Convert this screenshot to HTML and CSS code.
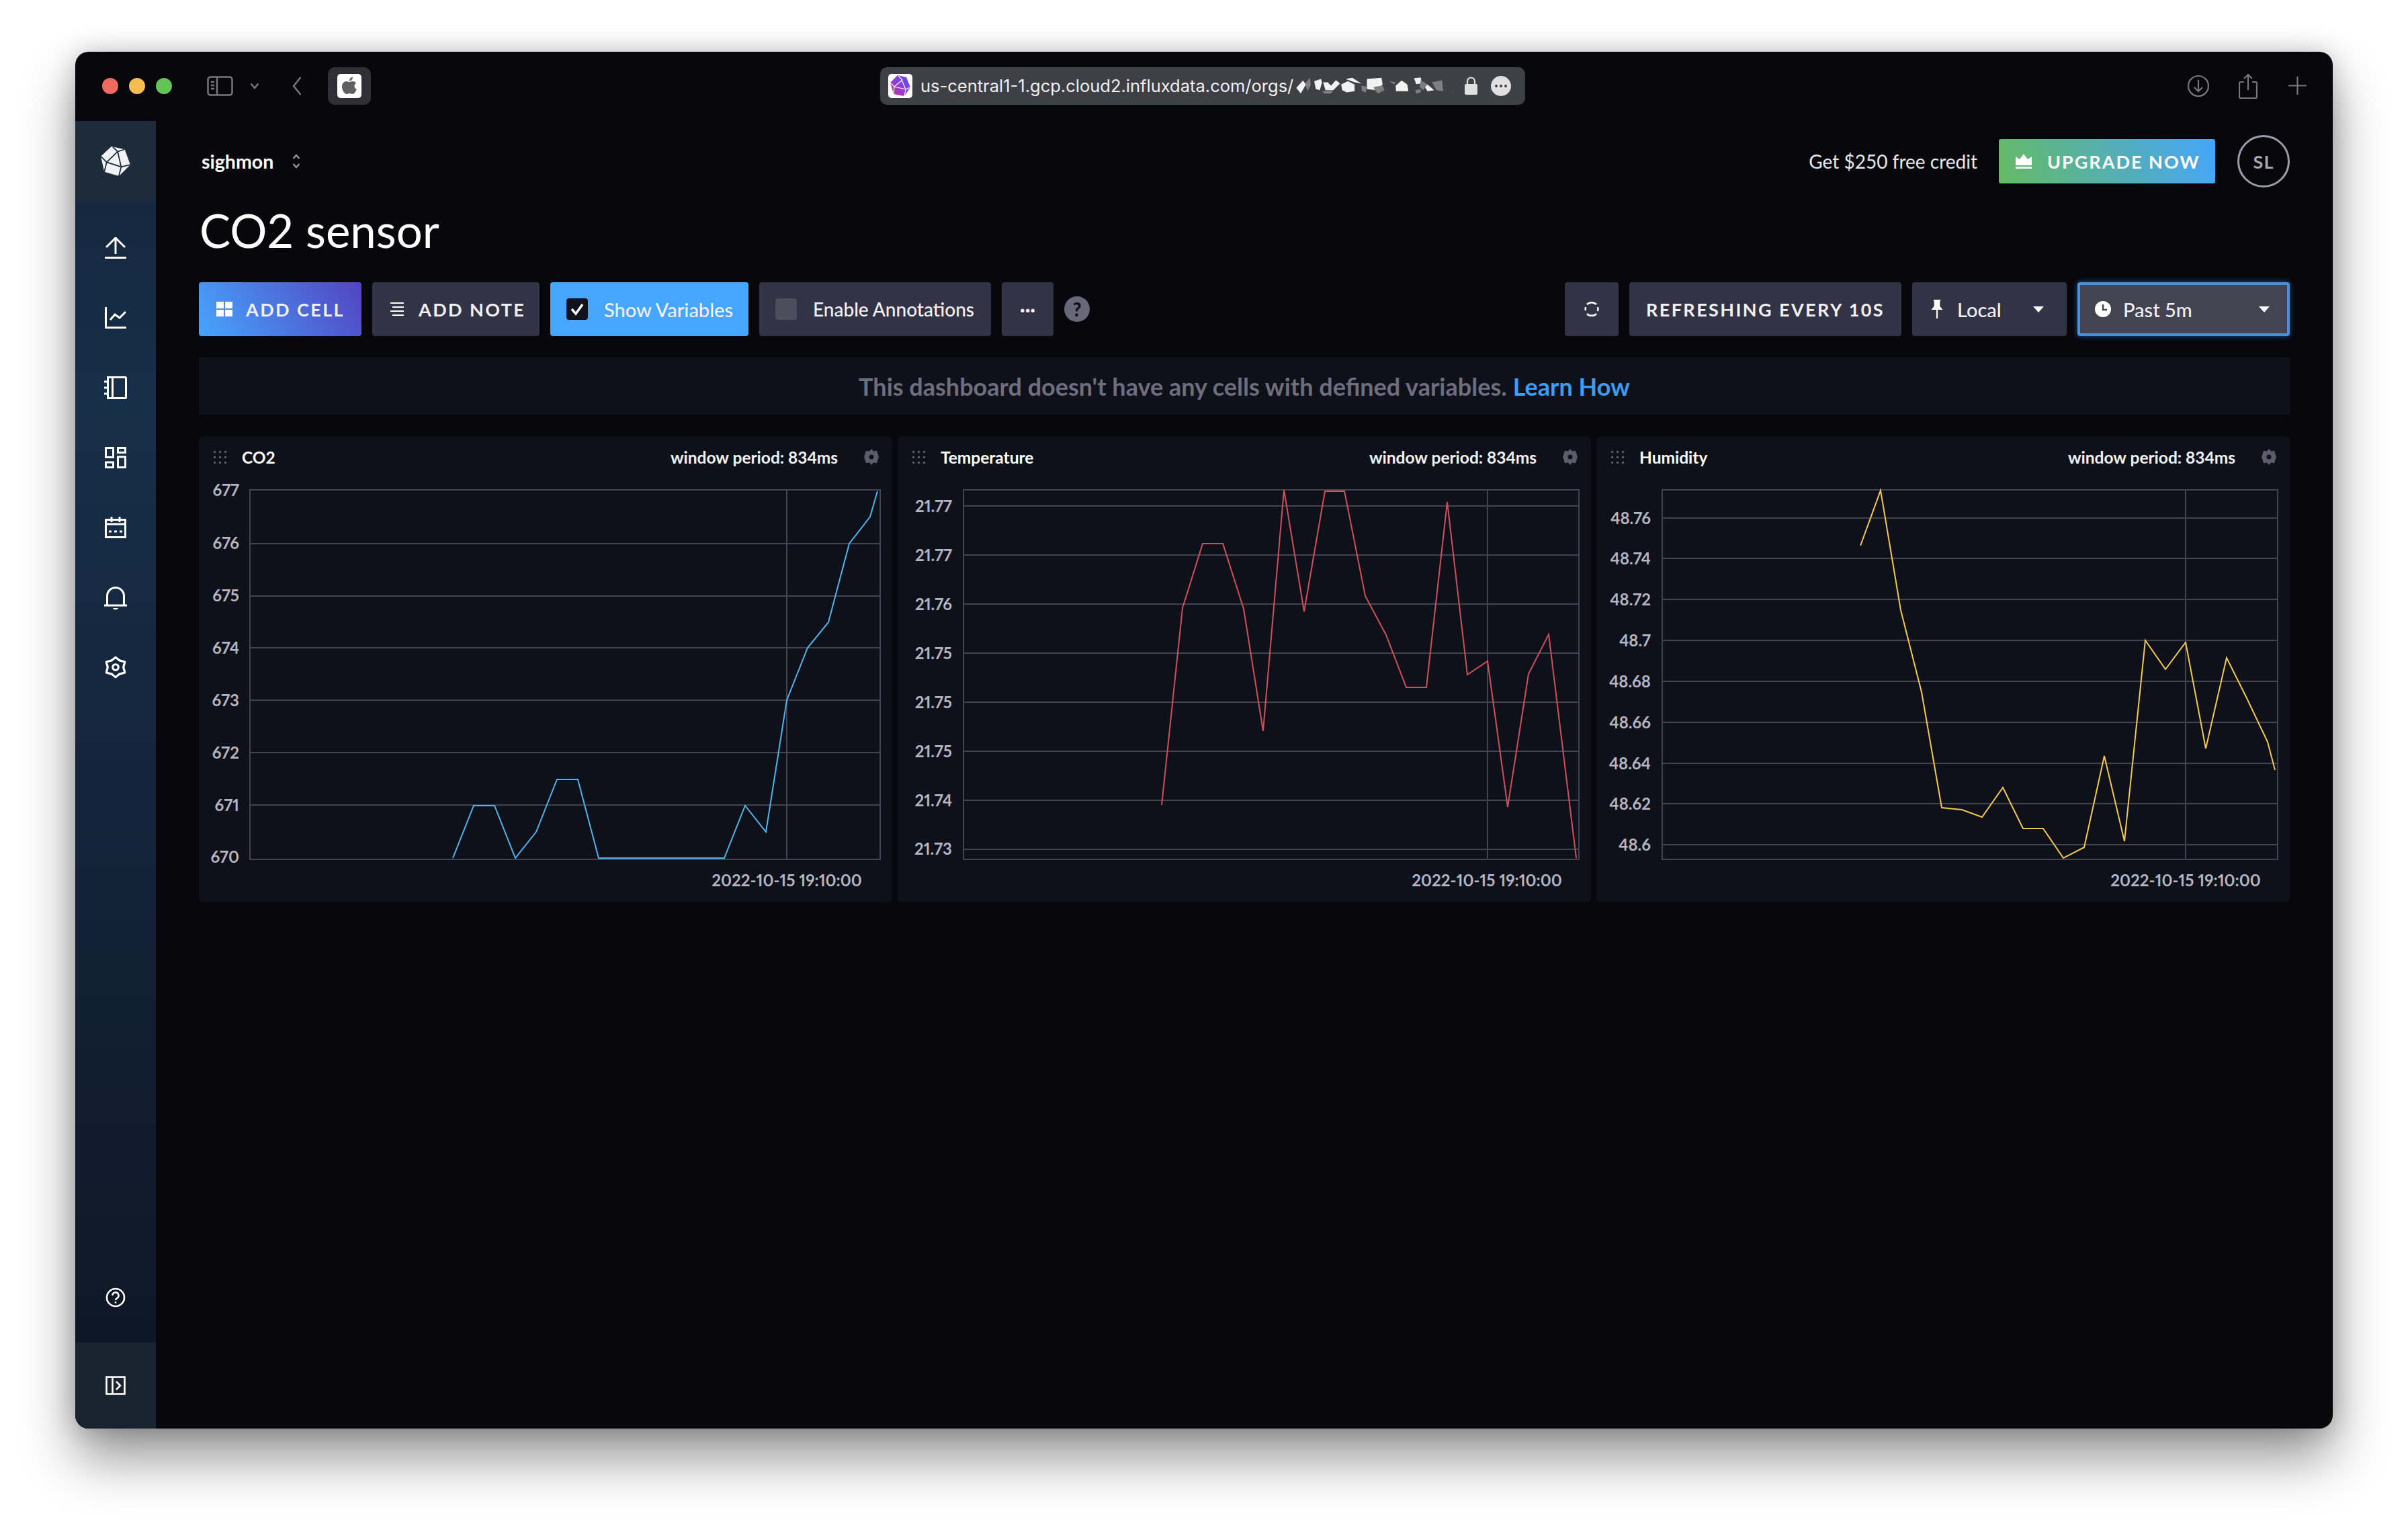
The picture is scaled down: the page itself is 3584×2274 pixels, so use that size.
FILE: index.html
```html
<!DOCTYPE html>
<html lang="en">
<head>
    <meta charset="UTF-8">
    <title>CO2 sensor</title>
    <link rel="stylesheet" href="styles.css">
</head>
<body>
<div class="window">

    <!-- browser chrome -->
    <div class="titlebar">
        <span class="light red"></span>
        <span class="light yellow"></span>
        <span class="light green"></span>
        <svg class="tb-sidebar" width="39" height="30" viewBox="0 0 39 30" fill="none" stroke="#77777c" stroke-width="2.5">
            <rect x="1.5" y="1.5" width="36" height="27" rx="4"/>
            <path d="M15 1.5v27M6 9h5M6 14h5M6 19h5"/>
        </svg>
        <svg class="tb-chevron" width="14" height="10" viewBox="0 0 14 10" fill="none" stroke="#77777c" stroke-width="2.5"><path d="M1.5 1.5L7 8l5.500-6.500"/></svg>
        <svg class="tb-back" width="14" height="28" viewBox="0 0 14 28" fill="none" stroke="#77777c" stroke-width="2.5"><path d="M12.500 1L2 14l10.500 13"/></svg>
        <div class="tb-tab">
            <div class="tab-icon">
                <svg width="24" height="28" viewBox="0 0 24 28" fill="#5f5f62">
                    <path d="M12 8c1.700 0 3-1 5-1 2.200 0 4 1 5 2.700-3.800 2.200-3.200 7.500.8 9-1.200 3.200-3.500 7.300-6 7.300-1.700 0-2.600-1-4.500-1s-3 1-4.500 1C4.800 26 1 20 1 15c0-5 3.200-8 6.500-8C9.200 7 10.500 8 12 8z"/>
                    <path d="M12 6.500C12 3.500 14 1 17 .5c.2 3-2 6-5 6z"/>
                </svg>
            </div>
        </div>
        <div class="urlbar">
            <div class="url-favicon">
                <svg width="36" height="36" viewBox="0 0 36 36">
                    <defs>
                        <linearGradient id="favgrad" x1="0" y1="1" x2="1" y2="0">
                            <stop offset="0" stop-color="#d42a7c"/>
                            <stop offset=".5" stop-color="#8a3fe0"/>
                            <stop offset="1" stop-color="#5a4df0"/>
                        </linearGradient>
                    </defs>
                    <polygon points="14,2 27,5 33,20 24,33 8,30 3,13" fill="url(#favgrad)"/>
                    <path d="M15 3l6 6M21 9L9 19M21 9l-1 0 6 14M9 19l17 4M26 23l-2 10M26 23l7-3M3 13l6 6M9 19l-1 11" stroke="#fff" stroke-width="1.200" fill="none"/>
                </svg>
            </div>
            <span class="url-text">us-central1-1.gcp.cloud2.influxdata.com/orgs/</span>
            <!-- the org id is smudged out in the screenshot -->
            <svg class="url-smudge" width="237" height="37" viewBox="75 50 710 110">
                <g fill="#f2f2f2">
                    <polygon points="85,115 115,82 128,100 105,140"/>
                    <polygon points="165,85 195,75 200,90 190,125 172,120"/>
                    <polygon points="205,90 225,90 240,105 262,80 280,95 250,125 215,125"/>
                    <polygon points="285,100 315,85 345,100 345,130 310,135 290,125"/>
                    <polygon points="305,75 335,70 375,95 345,90"/>
                    <polygon points="400,75 465,70 470,100 440,125 400,120"/>
                    <polygon points="528,105 555,82 580,100 585,130 530,130"/>
                    <polygon points="610,72 640,68 645,95 620,98"/>
                    <polygon points="655,105 670,100 700,125 670,130"/>
                </g>
                <g fill="#7d7d82">
                    <polygon points="125,95 145,70 150,100 135,130"/>
                    <polygon points="200,130 250,125 240,140 210,140"/>
                    <polygon points="375,105 400,110 395,135 378,130"/>
                    <polygon points="430,110 470,105 478,125 450,140 435,125"/>
                    <polygon points="500,85 530,90 520,100"/>
                    <polygon points="640,80 670,100 650,125 635,110"/>
                    <polygon points="615,125 640,120 640,135 620,140"/>
                    <polygon points="690,90 735,80 740,130 710,125"/>
                </g>
                <polygon points="780,130 800,135 795,152 785,150" fill="#505056"/>
            </svg>
            <svg class="url-lock" width="19" height="27" viewBox="0 0 19 27">
                <path d="M4 12V7a5.500 5.500 0 0 1 11 0v5" fill="none" stroke="#e0e0e0" stroke-width="2.200"/>
                <rect x="0" y="11" width="19" height="16" rx="2" fill="#e0e0e0"/>
            </svg>
            <div class="url-more"><span></span><span></span><span></span></div>
        </div>
        <svg class="tb-download" width="32" height="34" viewBox="0 0 32 34" fill="none" stroke="#77777c" stroke-width="2.200">
            <circle cx="16" cy="17" r="15"/>
            <path d="M16 8v17M10 19l6 6 6-6"/>
        </svg>
        <svg class="tb-share" width="28" height="38" viewBox="0 0 28 38" fill="none" stroke="#77777c" stroke-width="2.200">
            <path d="M8 13H3a2 2 0 0 0-2 2v20a2 2 0 0 0 2 2h22a2 2 0 0 0 2-2V15a2 2 0 0 0-2-2h-5"/>
            <path d="M14 25V2M8 8l6-6 6 6"/>
        </svg>
        <svg class="tb-plus" width="27" height="27" viewBox="0 0 27 27" fill="none" stroke="#77777c" stroke-width="2.200"><path d="M13.500 0v27M0 13.500h27"/></svg>
    </div>

    <div class="app">
        <nav class="sidebar">
            <div class="side-logo">
                <svg width="46" height="46" viewBox="0 0 44 44">
                    <polygon points="16,1 35,5 43,27 27,43 6,37 1,15" fill="#f1f2f6"/>
                    <path d="M18 1.500L25 8.300M25 8.300L9.300 23.300M25 8.300L35 5M25 8.300L30 30M9.300 23.300L30 30M30 30L26.700 43M30 30L43 27M1 15L9.300 23.300M9.300 23.300L6 37" stroke="#1d2b3b" stroke-width="1.700" fill="none"/>
                </svg>
            </div>
            <div class="side-item">
                <svg width="32" height="32" viewBox="0 0 32 32" class="side-icon">
                    <path d="M16 2v23M2 15L16 1l14 14"/>
                    <path d="M0 30.500h32"/>
                </svg>
            </div>
            <div class="side-item">
                <svg width="32" height="32" viewBox="0 0 32 32" class="side-icon">
                    <path d="M1.500 0v30.500H32"/>
                    <path d="M8 19l7-8 7 5 9-9"/>
                </svg>
            </div>
            <div class="side-item">
                <svg width="34" height="34" viewBox="0 0 34 34" class="side-icon">
                    <path d="M5.500 1.500h26a1 1 0 0 1 1 1v29a1 1 0 0 1-1 1h-26zM12.500 1.500v31M0 8h5M0 17h5M0 26h5"/>
                </svg>
            </div>
            <div class="side-item">
                <svg width="32" height="32" viewBox="0 0 32 32" class="side-icon">
                    <rect x="1.500" y="1.500" width="11" height="14"/>
                    <rect x="19.500" y="1.500" width="11" height="7"/>
                    <rect x="1.500" y="23" width="11" height="7.500"/>
                    <rect x="19.500" y="15" width="11" height="15.500"/>
                </svg>
            </div>
            <div class="side-item">
                <svg width="32" height="32" viewBox="0 0 32 32" class="side-icon">
                    <path d="M1.500 4.500h29v26h-29zM1.500 11h29M10 0v8M22 0v8"/>
                    <path d="M6 22h4M14 22h4M22 22h4"/>
                </svg>
            </div>
            <div class="side-item bell">
                <svg width="34" height="36" viewBox="0 0 34 36" class="side-icon">
                    <path d="M4.500 28V14a12.500 12.500 0 0 1 25 0v14M0 28h34"/>
                    <path d="M13 32c1 3 7 3 8 0z" class="solid"/>
                </svg>
            </div>
            <div class="side-item">
                <svg width="34" height="34" viewBox="0 0 32 32" class="side-icon">
                    <polygon points="16,2 21.500,6.500 29,8.500 27,16 29,23.500 21.500,25.500 16,30 10.500,25.500 3,23.500 5,16 3,8.500 10.500,6.500" stroke-linejoin="round"/>
                    <circle cx="16" cy="16" r="4"/>
                </svg>
            </div>
            <div class="side-help">
                <svg width="30" height="30" viewBox="0 0 30 30" class="side-icon thin">
                    <circle cx="15" cy="15" r="13"/>
                    <path d="M10.500 12a4.500 4.500 0 1 1 6.800 3.800c-1.500.9-2.300 1.700-2.300 3.200"/>
                    <path d="M15 21v2.500"/>
                </svg>
            </div>
            <div class="side-bottom">
                <svg width="30" height="28" viewBox="0 0 30 28" class="side-icon thin">
                    <rect x="1.500" y="1.500" width="27" height="25"/>
                    <path d="M10.500 1.500v25M16 8l6 6-6 6"/>
                </svg>
            </div>
        </nav>

        <main class="main">
            <div class="topbar">
                <span class="org-name">sighmon</span>
                <svg class="org-arrows" width="12" height="22" viewBox="0 0 12 22" fill="none" stroke="#9a9aa5" stroke-width="2.200"><path d="M1.500 7L6 2l4.500 5M1.500 15L6 20l4.500-5"/></svg>
                <span class="credit">Get $250 free credit</span>
                <div class="upgrade">
                    <svg width="24" height="22" viewBox="0 0 24 22" fill="#fff">
                        <path d="M0 4l6 4 6-8 6 8 6-4v13H0zM0 19h24v3H0z"/>
                    </svg>
                    <span>UPGRADE NOW</span>
                </div>
                <div class="avatar">SL</div>
            </div>

            <h1 class="page-title">CO2 sensor</h1>

            <div class="toolbar">
                <div class="btn caps add-cell">
                    <svg width="24" height="22" viewBox="0 0 24 22" fill="#fff">
                        <rect width="11" height="10"/><rect x="13" width="11" height="10"/>
                        <rect y="12" width="11" height="10"/><rect x="13" y="12" width="11" height="10"/>
                    </svg>
                    ADD CELL
                </div>
                <div class="btn caps add-note">
                    <svg width="22" height="20" viewBox="0 0 22 20" fill="none" stroke="#fff" stroke-width="2"><path d="M0 1h20M3 7h17M0 13h20M3 19h17"/></svg>
                    ADD NOTE
                </div>
                <div class="btn toggle show-vars">
                    <span class="check on">
                        <svg width="22" height="20" viewBox="0 0 22 20" fill="none" stroke="#fff" stroke-width="3.500"><path d="M3 10l6 7L19 3"/></svg>
                    </span>
                    Show Variables
                </div>
                <div class="btn toggle enable-ann">
                    <span class="check"></span>
                    Enable Annotations
                </div>
                <div class="btn more">&#183;&#183;&#183;</div>
                <div class="help-dot">?</div>

                <div class="btn refresh">
                    <svg width="22" height="24" viewBox="0 0 22 24" fill="none" stroke="#fff" stroke-width="2.500"><path d="M4 5a10 10 0 0 1 14 0M18 19a10 10 0 0 1-14 0M2 14a10 10 0 0 1 0-5M20 9a10 10 0 0 1 0 6"/></svg>
                </div>
                <div class="btn caps refreshing">REFRESHING EVERY 10S</div>
                <div class="btn dropdown local">
                    <svg width="18" height="28" viewBox="0 0 16 26" fill="#fff"><path d="M3 0h10l-1 3v6l4 5H0l4-5V3zM7 14h2v12H7z"/></svg>
                    <span class="dd-label">Local</span>
                    <span class="caret"></span>
                </div>
                <div class="btn dropdown past">
                    <svg width="24" height="24" viewBox="0 0 24 24"><circle cx="12" cy="12" r="12" fill="#fff"/><path d="M12 5v8h6" fill="none" stroke="#434352" stroke-width="2.500"/></svg>
                    <span class="dd-label">Past 5m</span>
                    <span class="caret"></span>
                </div>
            </div>

            <div class="banner">This dashboard doesn't have any cells with defined variables. <a class="learn">Learn How</a></div>

            <div class="cells">
                <section class="cell">
                    <header class="cell-head">
                        <svg class="grip" width="20" height="19" viewBox="0 0 20 19" fill="#5c5c6a">
                            <rect width="3" height="3"/><rect x="8" width="3" height="3"/><rect x="16" width="3" height="3"/>
                            <rect y="8" width="3" height="3"/><rect x="8" y="8" width="3" height="3"/><rect x="16" y="8" width="3" height="3"/>
                            <rect y="16" width="3" height="3"/><rect x="8" y="16" width="3" height="3"/><rect x="16" y="16" width="3" height="3"/>
                        </svg>
                        <span class="cell-name">CO2</span>
                        <span class="cell-period">window period: 834ms</span>
                        <svg class="cell-gear" width="22" height="24" viewBox="0 0 22 24"><path d="M11 0l3 3.500 5-.8 1.500 5L22 12l-1.500 4.300-1.500 5-5-.8L11 24l-3-3.500-5 .8-1.500-5L0 12l1.500-4.300L3 2.700l5 .8z" fill="#5c5c6a"/><circle cx="11" cy="12" r="3.500" fill="#0f111a"/></svg>
                    </header>
                    <svg class="chart" width="1032" height="632" viewBox="0 0 1032 632">
                        <path class="grid" d="M76 19H1014V569H76ZM76 99H1014M76 177H1014M76 254H1014M76 332H1014M76 410H1014M76 488H1014M875 19V569"/>
                        <polyline class="line blue" points="378,567 409,489 440,489 471,567 502,528 533,450 564,450 595,567 782,567 813,489 844,528 875,332 906,254 937,216 968,99 999,59 1010,21"/>
                        <g class="tick">
                            <text x="60" y="28">677</text>
                            <text x="60" y="107">676</text>
                            <text x="60" y="185">675</text>
                            <text x="60" y="263">674</text>
                            <text x="60" y="341">673</text>
                            <text x="60" y="419">672</text>
                            <text x="60" y="497">671</text>
                            <text x="60" y="574">670</text>
                        </g>
                        <text class="stamp" x="875" y="609">2022-10-15 19:10:00</text>
                    </svg>
                </section>

                <section class="cell">
                    <header class="cell-head">
                        <svg class="grip" width="20" height="19" viewBox="0 0 20 19" fill="#5c5c6a">
                            <rect width="3" height="3"/><rect x="8" width="3" height="3"/><rect x="16" width="3" height="3"/>
                            <rect y="8" width="3" height="3"/><rect x="8" y="8" width="3" height="3"/><rect x="16" y="8" width="3" height="3"/>
                            <rect y="16" width="3" height="3"/><rect x="8" y="16" width="3" height="3"/><rect x="16" y="16" width="3" height="3"/>
                        </svg>
                        <span class="cell-name">Temperature</span>
                        <span class="cell-period">window period: 834ms</span>
                        <svg class="cell-gear" width="22" height="24" viewBox="0 0 22 24"><path d="M11 0l3 3.500 5-.8 1.500 5L22 12l-1.500 4.300-1.500 5-5-.8L11 24l-3-3.500-5 .8-1.500-5L0 12l1.500-4.300L3 2.700l5 .8z" fill="#5c5c6a"/><circle cx="11" cy="12" r="3.500" fill="#0f111a"/></svg>
                    </header>
                    <svg class="chart" width="1032" height="632" viewBox="0 0 1032 632">
                        <path class="grid" d="M98 19H1014V569H98ZM98 43H1014M98 116H1014M98 189H1014M98 262H1014M98 335H1014M98 408H1014M98 481H1014M98 554H1014M878 19V569"/>
                        <polyline class="line red" points="393,488 424,195 454,99 484,99 515,196 544,378 575,19 605,200 636,21 665,21 696,177 727,235 757,313 787,313 818,37 848,294 878,274 908,491 939,293 969,234 1010,567"/>
                        <g class="tick">
                            <text x="81" y="52">21.77</text>
                            <text x="81" y="125">21.77</text>
                            <text x="81" y="198">21.76</text>
                            <text x="81" y="271">21.75</text>
                            <text x="81" y="344">21.75</text>
                            <text x="81" y="417">21.75</text>
                            <text x="81" y="490">21.74</text>
                            <text x="81" y="562">21.73</text>
                        </g>
                        <text class="stamp" x="877" y="609">2022-10-15 19:10:00</text>
                    </svg>
                </section>

                <section class="cell">
                    <header class="cell-head">
                        <svg class="grip" width="20" height="19" viewBox="0 0 20 19" fill="#5c5c6a">
                            <rect width="3" height="3"/><rect x="8" width="3" height="3"/><rect x="16" width="3" height="3"/>
                            <rect y="8" width="3" height="3"/><rect x="8" y="8" width="3" height="3"/><rect x="16" y="8" width="3" height="3"/>
                            <rect y="16" width="3" height="3"/><rect x="8" y="16" width="3" height="3"/><rect x="16" y="16" width="3" height="3"/>
                        </svg>
                        <span class="cell-name">Humidity</span>
                        <span class="cell-period">window period: 834ms</span>
                        <svg class="cell-gear" width="22" height="24" viewBox="0 0 22 24"><path d="M11 0l3 3.500 5-.8 1.500 5L22 12l-1.500 4.300-1.500 5-5-.8L11 24l-3-3.500-5 .8-1.500-5L0 12l1.500-4.300L3 2.700l5 .8z" fill="#5c5c6a"/><circle cx="11" cy="12" r="3.500" fill="#0f111a"/></svg>
                    </header>
                    <svg class="chart" width="1032" height="632" viewBox="0 0 1032 632">
                        <path class="grid" d="M98 19H1014V569H98ZM98 61H1014M98 121H1014M98 182H1014M98 243H1014M98 304H1014M98 365H1014M98 426H1014M98 486H1014M98 547H1014M877 19V569"/>
                        <polyline class="line yellow" points="393,102 423,20 453,198 484,320 514,492 544,495 574,506 605,462 635,523 665,523 695,567 726,551 756,415 786,542 817,243 847,286 877,246 907,404 938,269 968,329 999,394 1010,436"/>
                        <g class="tick">
                            <text x="81" y="70">48.76</text>
                            <text x="81" y="130">48.74</text>
                            <text x="81" y="191">48.72</text>
                            <text x="81" y="252">48.7</text>
                            <text x="81" y="313">48.68</text>
                            <text x="81" y="374">48.66</text>
                            <text x="81" y="435">48.64</text>
                            <text x="81" y="495">48.62</text>
                            <text x="81" y="556">48.6</text>
                        </g>
                        <text class="stamp" x="877" y="609">2022-10-15 19:10:00</text>
                    </svg>
                </section>
            </div>
        </main>
    </div>
</div>
</body>
</html>
```

FILE: styles.css
```css
* {
    box-sizing: border-box;
}
html, body {
    margin: 0;
    height: 2274px;
    overflow: hidden;
}
body {
    background: #fff;
    font-family: "Lato", "Open Sans", sans-serif;
    color: #fff;
}

.window {
    margin: 77px 112px 0;
    height: 2049px;
    border-radius: 20px;
    background: #07070c;
    overflow: hidden;
    display: flex;
    flex-direction: column;
    box-shadow: 0 44px 80px rgba(0, 0, 0, 0.42), 0 0 36px rgba(0, 0, 0, 0.2);
}

/* browser chrome */
.titlebar {
    height: 103px;
    flex: none;
    display: flex;
    align-items: center;
    padding: 0 39px 2px 40px;
}
.light {
    width: 24px;
    height: 24px;
    border-radius: 50%;
    margin-right: 16px;
}
.light.red { background: #ee6a5f; }
.light.yellow { background: #f5bd4f; }
.light.green { background: #61c454; margin-right: 0; }
.tb-sidebar { margin-left: 52px; }
.tb-chevron { margin-left: 25px; }
.tb-back { margin-left: 49px; }
.tb-tab {
    margin-left: 39px;
    width: 64px;
    height: 56px;
    border-radius: 10px;
    background: #2f2f35;
    display: flex;
    align-items: center;
    justify-content: center;
}
.tab-icon {
    width: 36px;
    height: 36px;
    border-radius: 5px;
    background: #fff;
    display: flex;
    align-items: center;
    justify-content: center;
}
.urlbar {
    margin-left: 758px;
    width: 960px;
    height: 56px;
    border-radius: 10px;
    background: #3f3f46;
    display: flex;
    align-items: center;
    padding-left: 12px;
    font-family: "Inter", sans-serif;
}
.url-favicon {
    width: 36px;
    height: 36px;
    background: #fff;
    border-radius: 5px;
    flex: none;
}
.url-text {
    margin-left: 12px;
    width: 556px;
    flex: none;
    font-size: 25.5px;
    color: #f0f0f2;
    white-space: nowrap;
}
.url-smudge { flex: none; }
.url-lock { margin-left: 17px; flex: none; }
.url-more {
    margin-left: 20px;
    width: 30px;
    height: 30px;
    border-radius: 50%;
    background: #e0e0e0;
    display: flex;
    align-items: center;
    justify-content: center;
    gap: 3px;
    flex: none;
}
.url-more span {
    width: 4px;
    height: 4px;
    border-radius: 50%;
    background: #3f3f46;
}
.tb-download { margin-left: auto; }
.tb-share { margin-left: 44px; }
.tb-plus { margin-left: 46px; }

.app {
    flex: 1;
    display: flex;
    min-height: 0;
}

/* sidebar */
.sidebar {
    width: 120px;
    flex: none;
    display: flex;
    flex-direction: column;
    background: linear-gradient(180deg, #14263c 0%, #172e49 22%, #14253b 50%, #0d1523 100%);
    padding-top: 0;
}
.side-logo {
    height: 120px;
    background: #1d2b3b;
    display: flex;
    align-items: center;
    justify-content: center;
    margin-bottom: 17px;
}
.side-item {
    height: 104px;
    display: flex;
    align-items: center;
    justify-content: center;
}
.side-item.bell {
    padding-top: 3px;
}
.side-icon {
    fill: none;
    stroke: #fff;
    stroke-width: 3;
}
.side-icon.thin {
    stroke-width: 2.6;
}
.side-icon .solid {
    fill: #fff;
    stroke: none;
}
.side-help {
    margin-top: auto;
    height: 134px;
    display: flex;
    align-items: center;
    justify-content: center;
}
.side-bottom {
    height: 128px;
    background: #19232f;
    display: flex;
    align-items: center;
    justify-content: center;
}

/* main page */
.main {
    flex: 1;
    min-width: 0;
    padding: 0 64px;
}
.topbar {
    height: 120px;
    display: flex;
    align-items: center;
}
.org-name {
    margin-left: 4px;
    font-size: 28.5px;
    font-weight: 700;
}
.org-arrows {
    margin-left: 28px;
}
.credit {
    margin-left: auto;
    font-size: 28px;
    color: #e7e8ee;
}
.upgrade {
    margin-left: 32px;
    width: 322px;
    height: 66px;
    border-radius: 3px;
    background: linear-gradient(70deg, #65ba62 0%, #45a5fb 100%);
    display: flex;
    align-items: center;
    padding-left: 25px;
    gap: 23px;
    font-size: 27px;
    font-weight: 700;
    letter-spacing: 2px;
}
.avatar {
    margin-left: 33px;
    width: 78px;
    height: 78px;
    border-radius: 50%;
    border: 3px solid #9d9da9;
    color: #a6a6b2;
    display: flex;
    align-items: center;
    justify-content: center;
    font-size: 27px;
    font-weight: 700;
    letter-spacing: 1px;
}
.page-title {
    margin: 0;
    height: 120px;
    padding-left: 1px;
    font-size: 69px;
    line-height: 86px;
    font-weight: 400;
}

.toolbar {
    height: 80px;
    display: flex;
    align-items: center;
    gap: 16px;
}
.btn {
    height: 80px;
    flex: none;
    border-radius: 4px;
    background: #333346;
    display: flex;
    align-items: center;
    font-size: 28px;
    font-weight: 500;
    color: #f1f1f5;
    white-space: nowrap;
}
.btn.caps {
    font-size: 27px;
    font-weight: 700;
    letter-spacing: 2.4px;
}
.add-cell {
    width: 242px;
    padding-left: 26px;
    gap: 20px;
    background: linear-gradient(60deg, #46a5fd 0%, #5244c0 100%);
}
.add-note {
    width: 249px;
    padding-left: 27px;
    gap: 20px;
}
.toggle {
    padding-left: 24px;
    gap: 24px;
}
.show-vars {
    width: 295px;
    background: #46a6fd;
    font-size: 29px;
}
.enable-ann {
    width: 345px;
}
.check {
    width: 32px;
    height: 32px;
    border-radius: 4px;
    background: #4d4d5e;
    display: flex;
    align-items: center;
    justify-content: center;
}
.check.on {
    background: #12121e;
}
.more {
    width: 77px;
    justify-content: center;
    font-weight: 700;
}
.help-dot {
    width: 38px;
    height: 38px;
    border-radius: 50%;
    background: #686878;
    color: #12121e;
    font-size: 28px;
    font-weight: 900;
    display: flex;
    align-items: center;
    justify-content: center;
    margin-right: auto;
}
.refresh {
    width: 80px;
    justify-content: center;
}
.refreshing {
    width: 405px;
    justify-content: center;
}
.dropdown {
    padding-left: 28px;
    font-size: 29px;
}
.local {
    width: 230px;
    gap: 21px;
}
.past {
    width: 316px;
    gap: 18px;
    padding-left: 22px;
    background: #434352;
    border: 4px solid #4a90d8;
    box-shadow: 0 0 8px rgba(70, 150, 240, 0.55);
}
.caret {
    margin-left: auto;
    margin-right: 34px;
    width: 0;
    height: 0;
    border-left: 8px solid transparent;
    border-right: 8px solid transparent;
    border-top: 9px solid #fff;
}
.past .caret {
    margin-right: 26px;
}

.banner {
    margin-top: 32px;
    height: 85px;
    border-radius: 4px;
    background: #0f111a;
    display: flex;
    align-items: center;
    justify-content: center;
    gap: 9px;
    font-size: 36px;
    font-weight: 700;
    color: #6e6e7f;
}
.learn {
    color: #3c9df2;
}

.cells {
    margin-top: 33px;
    display: grid;
    grid-template-columns: repeat(3, 1032px);
    gap: 8px;
}
.cell {
    height: 692px;
    border-radius: 6px;
    background: #0f111a;
    display: flex;
    flex-direction: column;
}
.cell-head {
    height: 60px;
    flex: none;
    display: flex;
    align-items: center;
    padding: 0 20px 0 22px;
}
.cell-name {
    margin-left: 22px;
    font-size: 24.5px;
    font-weight: 700;
}
.cell-period {
    margin-left: auto;
    font-size: 24.5px;
    font-weight: 700;
    color: #f1f1f5;
}
.cell-gear {
    margin-left: 39px;
}
.chart {
    display: block;
}
.grid {
    fill: none;
    stroke: #424250;
    stroke-width: 2;
}
.line {
    fill: none;
    stroke-width: 2;
}
.line.blue { stroke: #4fb3ee; }
.line.red { stroke: #cf4f5b; }
.line.yellow { stroke: #f2c94c; }
.tick text {
    font-size: 24px;
    font-weight: 700;
    fill: #b5b5c1;
    text-anchor: end;
    font-variant-numeric: proportional-nums;
}
.stamp {
    font-size: 24px;
    font-weight: 700;
    fill: #b5b5c1;
    text-anchor: middle;
    font-variant-numeric: proportional-nums;
}
```
